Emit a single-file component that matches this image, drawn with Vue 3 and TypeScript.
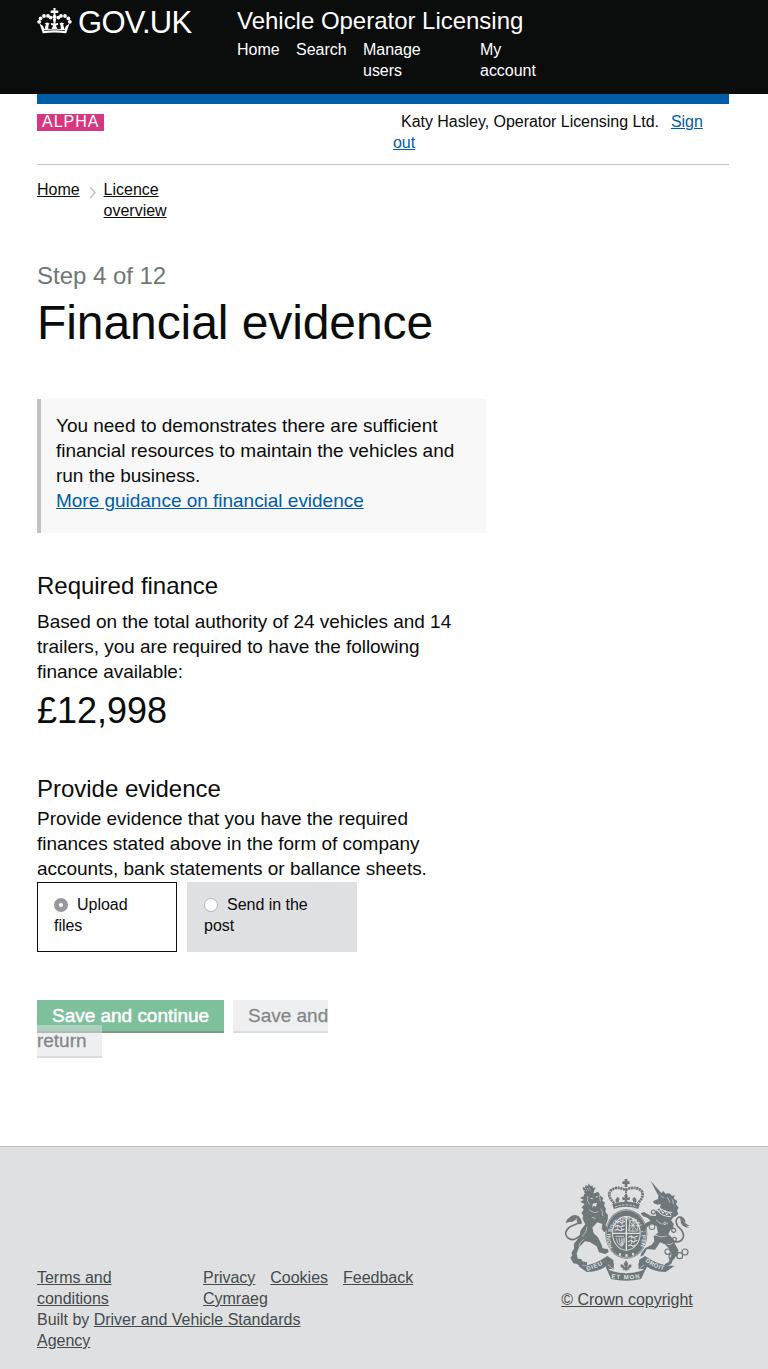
<script setup lang="ts">
interface NavItem { label: string; cls: string }
const nav: NavItem[] = [
  { label: 'Home', cls: 'n-home' },
  { label: 'Search', cls: 'n-search' },
  { label: 'Manage users', cls: 'n-users' },
  { label: 'My account', cls: 'n-account' },
]
const dots = [
  [2.2, 14.8], [3.6, 11.4], [7, 9], [11, 8.9], [13.6, 10.6],
  [21.4, 10.6], [24, 8.9], [28, 9], [31.4, 11.4], [32.8, 14.8],
]
const chain = [[353, 245, 8], [365, 260, 8], [389, 257, 9], [405, 246, 9], [371, 181, 6], [373, 208, 6], [306, 170, 8], [310, 126, 6], [345, 160, 5]]
</script>

<template>
  <div class="page">
    <header class="top">
      <a class="logo">
        <svg class="crown" width="35" height="30" viewBox="0 0 35 30">
          <g fill="#fff">
            <circle v-for="(d, i) in dots" :key="i" :cx="d[0]" :cy="d[1]" r="1.9" />
            <circle cx="17.5" cy="10" r="2" />
            <path d="M16.400 1h2.200l-.2 2.500h2.900v2.500h-2.900l.2 3h-2.200l.2-3h-2.900V3.500h2.900z" />
            <path d="M2.500 16.500l3.600 2.500 1.500 3.500 1.300-5.500-1.400-.8 3-.8 2 1.200-1 1.600-.3 3.500 3.300.4 1.700-3.600-2.200-.6v-2l2.800.5-1-4.600h3.400l-1 4.600 2.800-.5v2l-2.200.6 1.700 3.600 3.300-.4-.3-3.500-1-1.600 2-1.200 3 .8-1.400.8 1.300 5.500 1.500-3.500 3.600-2.500L29.200 26.300q-11.700-1.800-23.400 0z" />
          </g>
          <path d="M7 23.600q10.500-1.500 21 0" fill="none" stroke="#0b0c0c" stroke-width=".7" />
        </svg>
        <span class="logo-text">GOV.UK</span>
      </a>
      <div class="service">
        <div class="service-name">Vehicle Operator Licensing</div>
        <nav class="nav">
          <a v-for="n in nav" :key="n.label" :class="n.cls">{{ n.label }}</a>
        </nav>
      </div>
    </header>
    <div class="wrap">
      <div class="blue" />
      <div class="phase">
        <strong class="alpha">ALPHA</strong>
        <div class="user"><span class="name">Katy Hasley, Operator Licensing Ltd.</span><a class="link">Sign<br>out</a></div>
      </div>
      <div class="crumbs">
        <a>Home</a>
        <svg width="8" height="14" viewBox="0 0 8 14"><path d="M1.200 1.200L6 6.600 1.200 12" fill="none" stroke="#bfc1c3" stroke-width="1.500" /></svg>
        <a class="crumb-last">Licence overview</a>
      </div>
      <main>
        <div class="step">Step 4 of 12</div>
        <h1>Financial evidence</h1>
        <div class="notice">
          You need to demonstrates there are sufficient<br>financial resources to maintain the vehicles and<br>run the business.<br>
          <a class="link">More guidance on financial evidence</a>
        </div>
        <h2>Required finance</h2>
        <p class="based">Based on the total authority of 24 vehicles and 14<br>trailers, you are required to have the following<br>finance available:</p>
        <div class="amount">£12,998</div>
        <h2 class="provide">Provide evidence</h2>
        <p>Provide evidence that you have the required<br>finances stated above in the form of company<br>accounts, bank statements or ballance sheets.</p>
        <div class="choices">
          <label class="choice selected"><i class="radio on" />Upload<br>files</label>
          <label class="choice"><i class="radio" />Send in the<br>post</label>
        </div>
        <div class="actions">
          <a class="btn primary">Save and continue</a><a class="btn secondary">Save and<br>return</a>
        </div>
      </main>
    </div>
    <footer>
      <div class="foot-left">
        <div class="foot-links">
          <a class="terms">Terms and conditions</a>
          <div class="foot-others">
            <a>Privacy</a><a>Cookies</a><a>Feedback</a><a>Cymraeg</a>
          </div>
        </div>
        <div>Built by <a>Driver and Vehicle Standards<br>Agency</a></div>
      </div>
      <div class="copyright">
        <svg width="126" height="104" viewBox="42 24 378 312" fill="#6f777b">
          <!-- crown -->
          <path d="M224 27h8v7h7v8h-7v9h-8v-9h-7v-8h7z" />
          <g fill="none" stroke="#6f777b">
            <path d="M193 100Q170 78 182 62Q200 46 226 60Q254 46 274 62Q286 78 263 100" stroke-width="8" stroke-dasharray="6.500 1.800" />
            <path d="M228 56V98" stroke-width="6" stroke-dasharray="6 2" />
            <path d="M189 110Q228 96 267 110" stroke-width="15" />
            <path d="M195 111Q228 98 261 111" stroke="#dee0e2" stroke-width="2.500" stroke-dasharray="7 4" />
          </g>
          <path d="M222 76h12l-3 7 8-2v10l-8-2 3 9h-12l3-9-8 2V81l8 2zM203 80l6 7-3 9-8 2-2-9zM253 80l-6 7 3 9 8 2 2-9z" />
          <!-- garter and shield -->
          <ellipse cx="229" cy="192" rx="63" ry="74" />
          <ellipse cx="229" cy="190" rx="43" ry="52" fill="#dee0e2" />
          <ellipse cx="229" cy="190" rx="40" ry="49" />
          <ellipse cx="229" cy="192" rx="60.500" ry="71.500" fill="none" stroke="#dee0e2" stroke-width="1.500" />
          <path id="garter" d="M188 234A47 57 0 1 1 270 234" fill="none" />
          <text class="motto" font-size="16" fill="#dee0e2"><textPath href="#garter" textLength="238" lengthAdjust="spacingAndGlyphs">HONI SOIT QUI MAL Y PENSE</textPath></text>
          <path d="M207 250h6v7h-6zM226 253h7v7h-7zM246 249h6v7h-6z" fill="#dee0e2" />
          <g stroke="#dee0e2" fill="none">
            <path d="M229 140V240M188 190H270" stroke-width="4" />
            <path d="M199 158l8-4 7 5 11-5M195 169l9-3 8 5 12-5M194 181l9-3 8 4 12-5M235 202l9-4 6 5 13-5M234 215l9-4 7 5 12-5M234 228l8-4 6 5 9-5" stroke-width="3.500" />
            <path d="M204 152v9M216 158v8M203 167v9M215 173v9M245 199v9M255 204v9M245 213v9" stroke-width="2.500" />
            <path d="M236 150l25 31M261 151l-26 31M236 166h28M249 149v36M240 151h17l6 12v20h-27z" stroke-width="2.200" />
            <path d="M196 199h26M200 205q-2 14 14 25 12-10 8-28M207 203l4 23M215 203v25M220 206l-3 20" stroke-width="2.500" />
          </g>
          <!-- lion -->
          <path d="M97 51l7 2 3-8 6 4 3-9 5 9 6-3 2 8 8-2-8 19q-12-2-24 2z" />
          <path d="M102 63l20-3 M105 56l18-2" stroke="#dee0e2" stroke-width="2" stroke-dasharray="3 3" />
          <path d="M102 73L116 68 132 70 145 65 151 77 160 84 157 92 165 98 162 106 168 116 166 125 174 136 173 150 167 165 174 177 163 187 155 176 157 162 142 157 127 173 131 190 144 202 154 223 158 235 174 238 176 247 165 252 147 247 140 229 119 216 105 214 88 230 80 250 83 266 94 267 97 274 111 277 111 286 101 284 92 290 81 282 70 280 61 263 67 256 64 248 72 236 72 221 88 201 92 181 106 163 98 148 99 136 94 129 101 119 95 112 104 103 91 95 101 90 90 83 101 79z" />
          <path d="M119 84l10-1-2 5zM136 80l8-2-3 5zM128 101l13-3-3 12-7-3-4 7z" fill="#dee0e2" />
          <path d="M113 78q-4 16 6 26M148 75l3 19M118 119q13 13 27 6M126 142l11 4M111 170q0 17-15 30M103 207q-14 8-17 22M152 116q8 9 6 23" fill="none" stroke="#dee0e2" stroke-width="1.800" />
          <path d="M91 197Q68 217 53 203Q38 188 59 171Q78 162 94 156" fill="none" stroke="#6f777b" stroke-width="5" />
          <path d="M95 161Q95 141 80 136Q65 133 57 144 50 147 47 160 57 154 66 156 78 150 82 143 76 156 88 163z" />
          <!-- unicorn -->
          <path d="M302 33l32 36-10 6z" />
          <path d="M326 72L334 69 340 63 346 71 358 70 366 77 374 76 371 85 382 94 378 103 386 113 381 122 385 131 378 139 370 142 363 151 371 161 370 174 361 180 355 193 371 208 375 222 385 240 384 256 371 264 364 282 347 289 344 283 356 276 365 252 356 235 345 223 330 217 315 239 291 237 280 256 271 260 274 249 286 234 305 224 313 214 311 199 324 188 320 169 309 164 292 170 280 188 276 181 286 160 302 152 293 144 278 138 272 130 282 126 302 137 318 138 317 122 329 115 333 102 323 104 311 100 310 93 324 87z" />
          <path d="M319 119q18 22 44 21M325 109q17 19 42 18M320 120l9 5 2-9 8 14 6-9 5 14 7-9 6 10" fill="none" stroke="#dee0e2" stroke-width="3" />
          <path d="M334 78l7 5M352 82l8 16M367 88l4 15M318 149q16 20 36 11M315 195q17 10 35 3M368 219q-7 8-17 4" fill="none" stroke="#dee0e2" stroke-width="2" />
          <path d="M366 213Q392 221 400 202Q403 185 383 169Q373 150 385 142Q399 138 405 157" fill="none" stroke="#6f777b" stroke-width="5" />
          <path d="M390 141Q400 145 402 157l17 11-11-1 10 7q-19-1-25-14z" />
          <g fill="none" stroke="#6f777b" stroke-width="3.500"><circle v-for="(c, i) in chain" :key="i" :cx="c[0]" :cy="c[1]" :r="c[2]" /></g>
          <g fill="none" stroke="#dee0e2" stroke-width="2"><circle cx="306" cy="170" r="6" /><circle cx="345" cy="160" r="4" /></g>
          <!-- ribbon -->
          <path d="M84 287Q126 291 172 258L190 270 190 280Q166 276 165 291 146 305 110 306z" />
          <path d="M374 287Q331 291 285 258L267 270 267 280Q291 276 292 291 311 305 347 306z" />
          <path d="M164 284Q172 273 192 280L191 298 174 296 186 303Q228 316 271 303L284 296 266 298 265 280Q285 273 294 284L273 327Q228 338 183 327z" />
          <path d="M174 284q8 7 15 13M283 284q-8 7-15 13M177 299q51 19 103 0" fill="none" stroke="#dee0e2" stroke-width="2" />
          <path d="M228 270l7 11-3 11q3-11 12-9 4 10-8 13l3 5-8-1-3 6-3-6-8 1 3-5q-12-3-8-13 9-2 12 9l-3-11z" stroke="#dee0e2" stroke-width="1" />
          <path id="dieu" d="M111 302Q142 295 171 275" fill="none" />
          <path id="mon" d="M184 324Q228 332 276 323" fill="none" />
          <path id="droit" d="M285 274Q312 296 350 302" fill="none" />
          <g class="motto" font-size="18" fill="#dee0e2">
            <text><textPath href="#dieu" textLength="51">DIEU</textPath></text>
            <text><textPath href="#mon" textLength="86">ET MON</textPath></text>
            <text><textPath href="#droit" textLength="62">DROIT</textPath></text>
          </g>
        </svg>
        <a>© Crown copyright</a>
      </div>
    </footer>
  </div>
</template>

<style>
body { margin: 0; background: #fff; }
</style>
<style scoped>
* { box-sizing: border-box; }
.page { width: 768px; height: 1369px; font: 19px/25px "Liberation Sans", Arial, sans-serif; letter-spacing: -.02px; color: #0b0c0c; display: flex; flex-direction: column; }
.top { height: 94px; flex: none; background: #0b0c0c; color: #fff; display: flex; padding: 0 37px; }
.logo { width: 200px; display: flex; padding-top: 7px; }
.crown { flex: none; margin-right: 6px; }
.logo-text { font-size: 31px; line-height: 31px; letter-spacing: -.7px; white-space: nowrap; }
.service-name { font-size: 24px; line-height: 30px; padding-top: 6px; height: 39px; white-space: nowrap; }
.nav { display: flex; font-size: 16px; line-height: 21px; }
.n-home { width: 59px; }
.n-search { width: 67px; }
.n-users { width: 117px; padding-right: 40px; }
.n-account { width: 60px; }
.wrap { margin: 0 39px 0 37px; height: 1052px; flex: none; }
.blue { height: 10px; background: #005ea5; }
.phase { height: 61px; border-bottom: 1px solid #bfc1c3; display: flex; justify-content: space-between; font-size: 16px; line-height: 21px; }
.alpha { background: #d53880; color: #fff; width: 67px; height: 17px; line-height: 16px; margin-top: 10px; padding-left: 5px; letter-spacing: 1px; font-weight: 400; }
.user { width: 336px; padding-top: 7px; letter-spacing: -.04px; }
.name { margin: 0 12px 0 8px; }
.link { color: #005ea5; text-decoration: underline; }
.crumbs { display: flex; padding-top: 14px; height: 96px; font-size: 16px; line-height: 21px; }
.crumbs a, footer a { text-decoration: underline; }
.crumbs svg { margin: 7px 7px 0 9px; flex: none; }
.crumb-last { width: 70px; }
.step { color: #6f777b; font-size: 24px; line-height: 30px; }
h1 { margin: 7px 0 51px; font-size: 48px; line-height: 50px; font-weight: 400; letter-spacing: -.08px; }
.notice { width: 449px; height: 134px; background: #f8f8f8; border-left: 4px solid #bfc1c3; padding: 14px 15px; white-space: nowrap; }
h2 { font-size: 24px; line-height: 30px; font-weight: 400; margin: 38px 0 8px; }
p { margin: 0; white-space: nowrap; }
.based { letter-spacing: -.04px; }
.amount { font-size: 36px; line-height: 40px; margin-top: 7px; }
h2.provide { margin: 43px 0 2px; }
.choices { display: flex; gap: 10px; font-size: 16px; line-height: 21px; margin-top: 1px; }
.choice { width: 170px; height: 70px; background: #dee0e2; padding: 12px 17px; }
.selected { width: 140px; background: #fff; border: 1px solid #0b0c0c; padding: 11px 16px; }
.radio { display: inline-block; width: 14px; height: 14px; border-radius: 50%; background: #fff; border: 1px solid #b5b5b5; margin-right: 9px; vertical-align: -2px; }
.radio.on { border: 5px solid #98989d; }
.actions { margin-top: 51px; line-height: 25px; white-space: nowrap; }
.btn { display: inline; padding: 5px 15px 5px; opacity: .5; }
.primary { background: #00823b; color: #fff; box-shadow: 0 2px 0 #003618; margin-right: 9px; -webkit-text-stroke: .5px #fff; }
.secondary { background: #dee0e2; box-shadow: 0 2px 0 #b7bbbf; -webkit-text-stroke: .3px #0b0c0c; }
footer { flex: 1; border-top: 1px solid #bfc1c3; background: #dee0e2; color: #454a4c; font-size: 16px; line-height: 21px; display: flex; justify-content: space-between; padding: 0 75px 0 37px; }
.foot-left { width: 396px; padding-top: 120px; }
.foot-links { display: flex; }
.terms { width: 100px; margin-right: 66px; }
.foot-others { display: flex; flex-wrap: wrap; column-gap: 15px; flex: 1; }
.copyright { width: 132px; padding-top: 31px; text-align: center; white-space: nowrap; }
.copyright svg { display: block; margin: 0 0 7px 3px; overflow: visible; }
.motto { font-family: "Liberation Sans", sans-serif; font-weight: 700; letter-spacing: 0; }
</style>
